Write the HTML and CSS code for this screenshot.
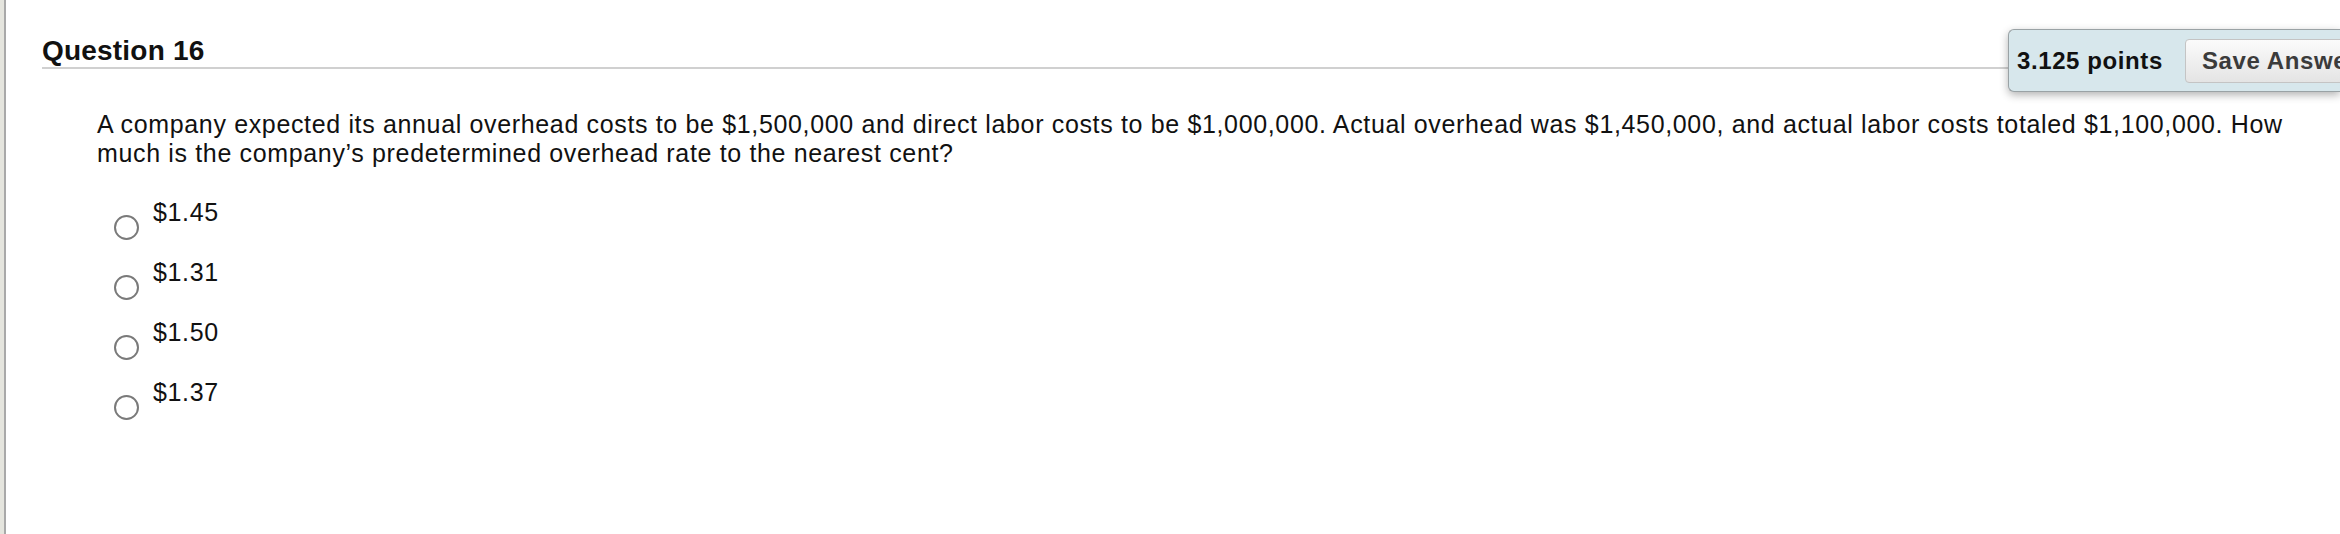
FILE: index.html
```html
<!DOCTYPE html>
<html lang="en">
<head>
    <meta charset="UTF-8">
    <title>Question 16</title>
    <link rel="stylesheet" href="styles.css">
</head>
<body>
    <div class="page">
        <div class="question-header">
            <h2>Question 16</h2>
            <div class="points-box">
                <span class="points">3.125 points</span>
                <button type="button">Save Answer</button>
            </div>
        </div>
        <div class="question-body">
            <p class="question-text">A company expected its annual overhead costs to be $1,500,000 and direct labor costs to be $1,000,000. Actual overhead was $1,450,000, and actual labor costs totaled $1,100,000. How much is the company’s predetermined overhead rate to the nearest cent?</p>
            <div class="options">
                <label class="option"><input type="radio" name="q16"><span>$1.45</span></label>
                <label class="option"><input type="radio" name="q16"><span>$1.31</span></label>
                <label class="option"><input type="radio" name="q16"><span>$1.50</span></label>
                <label class="option"><input type="radio" name="q16"><span>$1.37</span></label>
            </div>
        </div>
    </div>
</body>
</html>
```

FILE: styles.css
```css
html, body {
    margin: 0;
    overflow: hidden;
}
body {
    font-family: "Liberation Sans", Arial, sans-serif;
    color: #111;
    background-color: #fff;
    border-left: 4px solid #e5e5de;
}
.page {
    border-left: 2px solid #a9a9a9;
    min-height: 100vh;
    padding: 29px 0 0 36px;
    box-sizing: border-box;
}
.question-header {
    display: flex;
    align-items: flex-start;
}
.question-header h2 {
    flex: 1;
    margin: 6px 0 0;
    font-size: 28px;
    line-height: 32px;
    letter-spacing: 0.2px;
    border-bottom: 2px solid #d0d0d0;
}
.points-box {
    flex-shrink: 0;
    width: 332px;
    height: 63px;
    box-sizing: border-box;
    display: flex;
    align-items: center;
    gap: 22px;
    padding-left: 8px;
    background-color: #d7e7ec;
    border: 1px solid #9aa2a5;
    border-right: none;
    border-radius: 6px 0 0 6px;
    box-shadow: 0 3px 8px rgba(0, 0, 0, 0.3);
    overflow: hidden;
    white-space: nowrap;
}
.points {
    font-size: 24px;
    font-weight: bold;
    letter-spacing: 0.6px;
}
.points-box button {
    flex-shrink: 0;
    height: 44px;
    padding: 0 16px;
    font-family: inherit;
    font-size: 24px;
    font-weight: bold;
    letter-spacing: 0.6px;
    color: #3b3b3b;
    background: linear-gradient(#fbfbfb, #e4e4e4);
    border: 1px solid #c4c4c4;
    border-radius: 4px;
}
.question-body {
    margin: 0 40px 0 55px;
}
.question-text {
    margin: 18px 0 0;
    font-size: 25px;
    line-height: 29px;
    letter-spacing: 0.65px;
}
.options {
    margin-top: 30px;
    margin-left: 17px;
}
.option {
    display: flex;
    align-items: flex-start;
    gap: 14px;
    padding-bottom: 18px;
    font-size: 25px;
    line-height: 29px;
    letter-spacing: 0.65px;
}
.option input {
    appearance: none;
    width: 25px;
    height: 25px;
    margin: 17px 0 0;
    box-sizing: border-box;
    border: 2px solid #7a7a7a;
    border-radius: 50%;
    background-color: #fff;
}
```
